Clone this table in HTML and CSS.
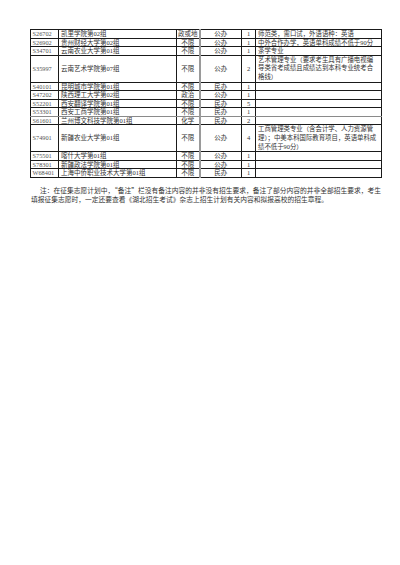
FILE: index.html
```html
<!DOCTYPE html>
<html lang="zh-CN">
<head>
<meta charset="utf-8">
<title>征集志愿计划</title>
<link rel="stylesheet" href="styles.css">
</head>
<body>
<div class="page">
  <table class="plan">
    <colgroup>
      <col class="c-code"><col class="c-name"><col class="c-subj"><col class="c-type"><col class="c-num"><col class="c-note">
    </colgroup>
    <tbody>
      <tr><td class="code">S26702</td><td class="name">凯里学院第02组</td><td class="subj">政或地</td><td class="type">公办</td><td class="num">1</td><td class="note">师范类，需口试，外语语种：英语</td></tr>
      <tr><td class="code">S26902</td><td class="name">贵州财经大学第02组</td><td class="subj">不限</td><td class="type">公办</td><td class="num">1</td><td class="note">中外合作办学，英语单科成绩不低于90分</td></tr>
      <tr><td class="code">S34701</td><td class="name">云南农业大学第01组</td><td class="subj">不限</td><td class="type">公办</td><td class="num">1</td><td class="note">茶学专业</td></tr>
      <tr class="tall"><td class="code">S35997</td><td class="name">云南艺术学院第07组</td><td class="subj">不限</td><td class="type">公办</td><td class="num">2</td><td class="note">艺术管理专业（要求考生具有广播电视编<br>导类省考成绩且成绩达到本科专业统考合<br>格线）</td></tr>
      <tr><td class="code">S40101</td><td class="name">昆明城市学院第01组</td><td class="subj">不限</td><td class="type">民办</td><td class="num">1</td><td class="note"></td></tr>
      <tr><td class="code">S47202</td><td class="name">陕西理工大学第02组</td><td class="subj">政治</td><td class="type">公办</td><td class="num">1</td><td class="note"></td></tr>
      <tr><td class="code">S52201</td><td class="name">西安翻译学院第01组</td><td class="subj">不限</td><td class="type">民办</td><td class="num">5</td><td class="note"></td></tr>
      <tr class="soft"><td class="code">S53301</td><td class="name">西安工商学院第01组</td><td class="subj">不限</td><td class="type">民办</td><td class="num">1</td><td class="note"></td></tr>
      <tr><td class="code">S61601</td><td class="name">兰州博文科技学院第01组</td><td class="subj">化学</td><td class="type">民办</td><td class="num">2</td><td class="note"></td></tr>
      <tr class="tall"><td class="code">S74901</td><td class="name">新疆农业大学第01组</td><td class="subj">不限</td><td class="type">公办</td><td class="num">4</td><td class="note">工商管理类专业（含会计学、人力资源管<br>理）；中美本科国际教育项目，英语单科成<br>绩不低于90分）</td></tr>
      <tr><td class="code">S75501</td><td class="name">喀什大学第01组</td><td class="subj">不限</td><td class="type">公办</td><td class="num">1</td><td class="note"></td></tr>
      <tr><td class="code">S78301</td><td class="name">新疆政法学院第01组</td><td class="subj">不限</td><td class="type">公办</td><td class="num">1</td><td class="note"></td></tr>
      <tr><td class="code">W68401</td><td class="name">上海中侨职业技术大学第01组</td><td class="subj">不限</td><td class="type">民办</td><td class="num">1</td><td class="note"></td></tr>
    </tbody>
  </table>
  <div class="remark">
    <span class="remark-line first">注：在征集志愿计划中，“备注”栏没有备注内容的并非没有招生要求，备注了部分内容的并非全部招生要求，考生</span>
    <span class="remark-line">填报征集志愿时，一定还要查看《湖北招生考试》杂志上招生计划有关内容和拟报高校的招生章程。</span>
  </div>
</div>
</body>
</html>
```

FILE: styles.css
```css
html, body {
  margin: 0;
  padding: 0;
  background: #ffffff;
}

.page {
  padding: 29px 19px 0 30px;
  font-family: "Liberation Serif", "Noto Sans CJK SC", serif;
  color: #333333;
}

.plan {
  border-collapse: collapse;
  table-layout: fixed;
  width: 351px;
  font-size: 6.5px;
}

.c-code { width: 28px; }
.c-name { width: 118px; }
.c-subj { width: 23px; }
.c-type { width: 42px; }
.c-num  { width: 14px; }
.c-note { width: 126px; }

.plan td {
  border: 1px solid #1a1a1a;
  padding: 0 1px;
  height: 7.5px;
  line-height: 7.5px;
  white-space: nowrap;
  overflow: hidden;
  vertical-align: middle;
}

.plan td.code {
  color: #555555;
  padding-left: 1.5px;
  font-size: 6.3px;
}

.plan td.name {
  padding-left: 2px;
}

.plan td.subj,
.plan td.type,
.plan td.num {
  text-align: center;
}

.plan td.type {
  border-left: 2px solid #9a9a9a;
}

.plan td.note {
  padding-left: 2px;
  font-size: 6.4px;
}

.plan tr.tall td {
  height: 26px;
}

.plan tr.tall td.note {
  line-height: 8.7px;
  vertical-align: top;
}

.plan tr.soft td {
  border-top-color: #8a8a8a;
  border-bottom-color: #8a8a8a;
}

.remark {
  margin: 8px 0 0 1px;
  width: 350px;
  font-family: "Noto Sans CJK SC", sans-serif;
  font-size: 6.75px;
  line-height: 9px;
  color: #333333;
}

.remark-line {
  display: block;
  white-space: nowrap;
}

.remark-line.first {
  text-indent: 9px;
  text-align: justify;
  text-align-last: justify;
}
```
